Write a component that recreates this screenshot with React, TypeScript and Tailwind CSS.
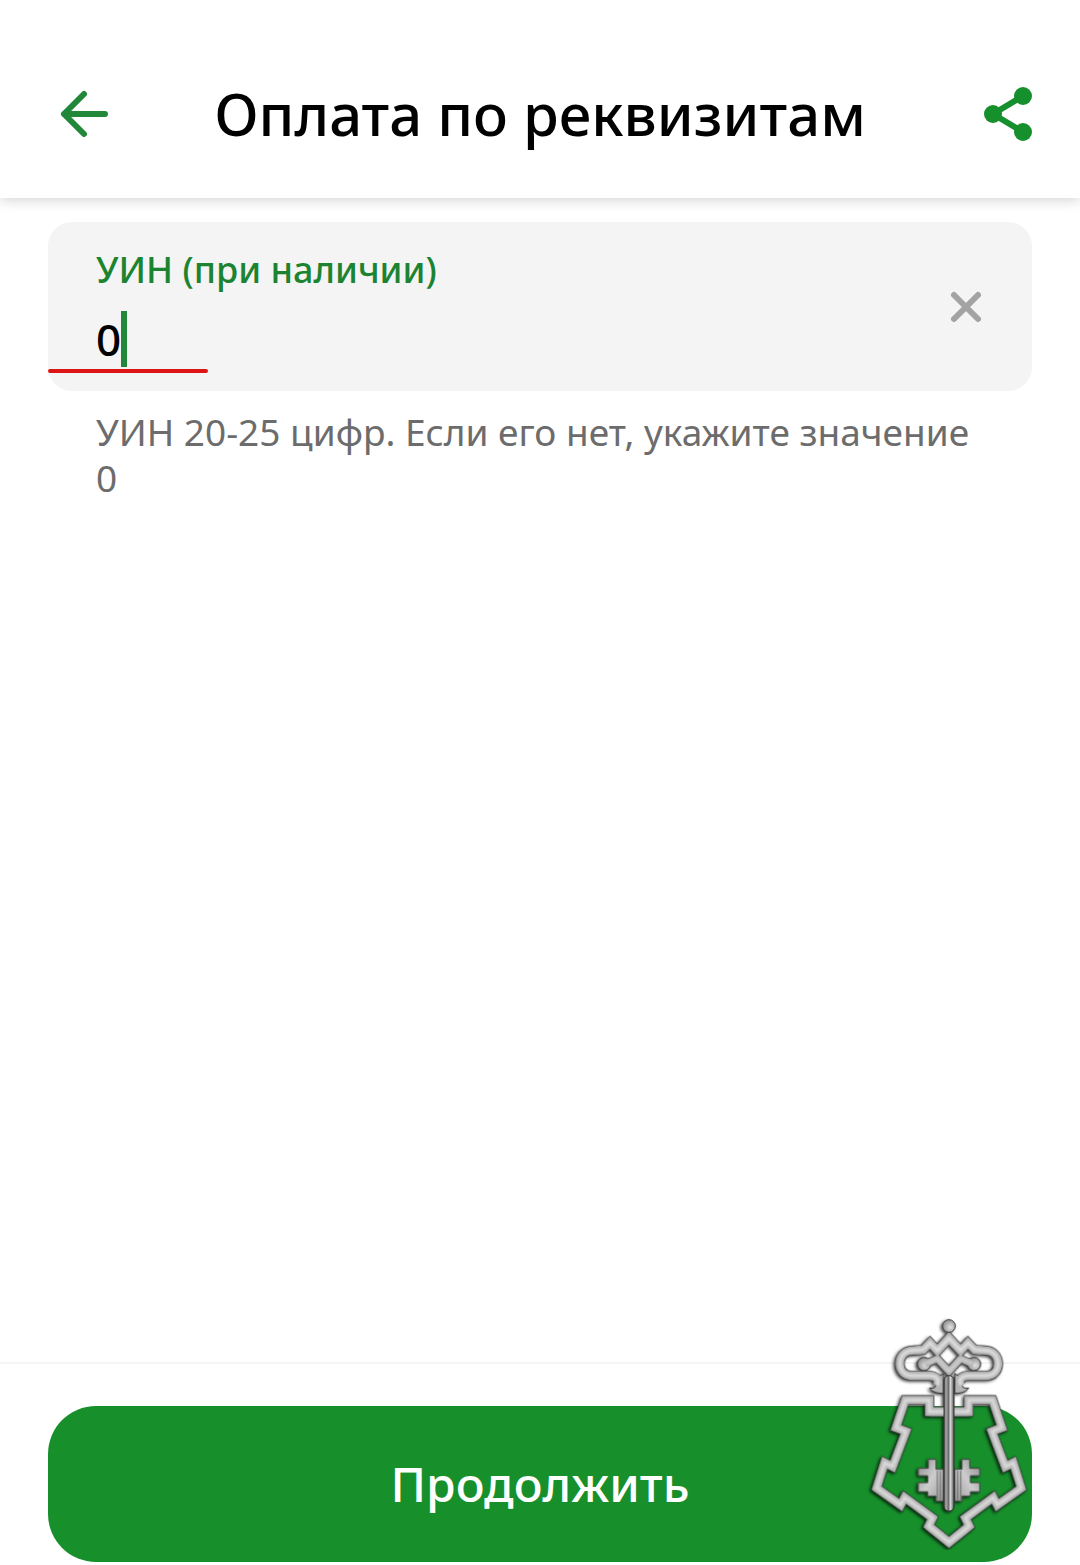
import { useState } from "react";

const body =
  "M327 305 L208 305 L208 270 L136 270 L108 353 L138 364 L98 470 L74 458 L50 534 L122 585 L134 562 L218 624 L206 648 L267 697 L328 648";
const crown =
  "M302 122 L267 84 L232 122 L210 98 L190 119 C172 121 160 121 150 122 C108 130 110 195 152 197 L212 197 C236 200 238 214 230 226";
const hook = "M250 190 L250 250 C232 250 216 246 208 234 C226 238 234 226 228 208 Z";
const inner = "M195 162 L232 146 L267 184 L302 146";
const bits =
  "M250 478 L228 478 L228 448 L205 448 L205 475 L175 475 L175 497 L203 497 L203 518 L175 518 L175 545 L203 545 L203 558 L228 558 L228 573 L250 573 Z";

type MirrorProps = { d: string; stroke?: string; width?: number; fill?: string; filter?: string };

function Mirrored({ d, stroke, width, fill = "none", filter }: MirrorProps) {
  return (
    <g fill={fill} stroke={stroke} strokeWidth={width} filter={filter}>
      <path d={d} />
      <path d={d} transform="matrix(-1 0 0 1 534 0)" />
    </g>
  );
}

function Emblem() {
  return (
    <svg viewBox="0 0 540 720" className="block h-[240px] w-[180px]" aria-hidden="true">
      <defs>
        <linearGradient id="shaft" x1="0" x2="1" y1="0" y2="0">
          <stop offset="0" stopColor="#5a5a5a" />
          <stop offset="0.2" stopColor="#a8a8a8" />
          <stop offset="0.45" stopColor="#6e6e6e" />
          <stop offset="0.65" stopColor="#d6d6d6" />
          <stop offset="1" stopColor="#555" />
        </linearGradient>
        <linearGradient id="bits" x1="0" x2="1" y1="0" y2="1">
          <stop offset="0" stopColor="#8e8e8e" />
          <stop offset="0.5" stopColor="#cdcdcd" />
          <stop offset="1" stopColor="#9a9a9a" />
        </linearGradient>
        <radialGradient id="ball" cx="0.6" cy="0.6" r="0.6">
          <stop offset="0" stopColor="#e2e2e2" />
          <stop offset="1" stopColor="#909090" />
        </radialGradient>
        <filter id="soft" x="-10%" y="-10%" width="120%" height="120%">
          <feGaussianBlur stdDeviation="3" />
        </filter>
        <filter id="shade" x="-10%" y="-10%" width="120%" height="120%">
          <feDropShadow dx="-5" dy="4" stdDeviation="5" floodColor="#000" floodOpacity="0.75" />
        </filter>
      </defs>
      <g filter="url(#shade)">
        <Mirrored d={body} stroke="#2b2b2b" width={29} />
        <Mirrored d={body} stroke="#b0b0b0" width={25} />
        <Mirrored d={body} stroke="#dadada" width={11} filter="url(#soft)" />

        <Mirrored d={inner} stroke="#2b2b2b" width={24} />
        <g fill="url(#ball)" stroke="#2b2b2b" strokeWidth="3">
          <circle cx="192" cy="162" r="20" />
          <circle cx="342" cy="162" r="20" />
        </g>
        <Mirrored d={crown} stroke="#2b2b2b" width={29} />
        <Mirrored d={hook} stroke="#2b2b2b" width={3} fill="#b4b4b4" />
        <Mirrored d={inner} stroke="#b0b0b0" width={20} />
        <Mirrored d={crown} stroke="#b0b0b0" width={25} />
        <Mirrored d={inner} stroke="#cfcfcf" width={8} filter="url(#soft)" />
        <Mirrored d={crown} stroke="#dedede" width={11} filter="url(#soft)" />

        <Mirrored d={bits} stroke="#444" width={3} fill="url(#bits)" />
        <Mirrored d="M232 482 V570 M241 482 V570" stroke="#666" width={3} />
        <circle cx="267" cy="48" r="19" fill="url(#ball)" stroke="#444" strokeWidth="3" />
        <rect x="252" y="197" width="30" height="406" rx="14" fill="url(#shaft)" stroke="#333" strokeWidth="3" />
      </g>
    </svg>
  );
}

export default function App() {
  const [value, setValue] = useState("0");
  return (
    <div className="flex min-h-screen flex-col bg-white font-['Noto_Sans',sans-serif] font-medium text-black">
      <header className="flex items-center justify-between px-12 pt-[60px] pb-[30px] shadow-[0_2px_12px_rgba(0,0,0,0.18)]">
        <button type="button" aria-label="Назад" className="flex h-[108px] w-[72px] items-center">
          <svg viewBox="0 0 72 72" className="size-[72px]" fill="none" stroke="#21883a" strokeWidth="6" strokeLinecap="round" strokeLinejoin="round">
            <path d="M57 36H16M36 16L16 36l20 20" />
          </svg>
        </button>
        <h1 className="text-[58px] leading-[108px] whitespace-nowrap">Оплата по реквизитам</h1>
        <button type="button" aria-label="Поделиться" className="flex h-[108px] w-[72px] items-center justify-end">
          <svg viewBox="0 0 72 72" className="size-[72px]" fill="#16902c" stroke="#16902c">
            <path d="M63 18L33 36l30 18" fill="none" strokeWidth="6" />
            <circle cx="63" cy="18" r="9" stroke="none" />
            <circle cx="33" cy="36" r="9" stroke="none" />
            <circle cx="63" cy="54" r="9" stroke="none" />
          </svg>
        </button>
      </header>

      <main className="flex-1 px-12 pt-6">
        <div className="relative flex h-[169px] items-center justify-between rounded-3xl bg-[#f4f4f4] pr-9 pl-12">
          <div className="flex flex-col">
            <label htmlFor="uin" className="text-[36px] leading-[46px] text-[#1c8330]">
              УИН (при наличии)
            </label>
            <div className="mt-[18px] flex h-14 items-center">
              <input
                id="uin"
                value={value}
                onChange={(e) => setValue(e.target.value)}
                inputMode="numeric"
                aria-describedby="uin-hint"
                className="field-sizing-content h-14 bg-transparent p-0 text-[44px] leading-[56px] caret-transparent outline-none"
              />
              <span className="h-14 w-1.5 bg-[#21883a]" />
            </div>
          </div>
          <button type="button" aria-label="Очистить" onClick={() => setValue("")}>
            <svg viewBox="0 0 60 60" className="size-[60px]" stroke="#a3a3a3" strokeWidth="6" strokeLinecap="round">
              <path d="M18 18l24 24M42 18L18 42" />
            </svg>
          </button>
          <span className="absolute bottom-[18px] left-0 h-1 w-40 rounded-full bg-[#dd1414]" />
        </div>
        <p id="uin-hint" className="px-12 pt-[18px] text-[37px] leading-[46px] font-normal text-[#6c6c6c]">
          УИН 20-25 цифр. Если его нет, укажите значение 0
        </p>
      </main>

      <footer className="relative border-t-2 border-[#f4f4f4] px-12 pt-[42px] pb-[3px]">
        <button type="button" className="h-[156px] w-full rounded-[48px] bg-[#17902c] text-[48px] text-white">
          Продолжить
        </button>
        <div className="pointer-events-none absolute right-10 bottom-[15px]">
          <Emblem />
        </div>
      </footer>
    </div>
  );
}
